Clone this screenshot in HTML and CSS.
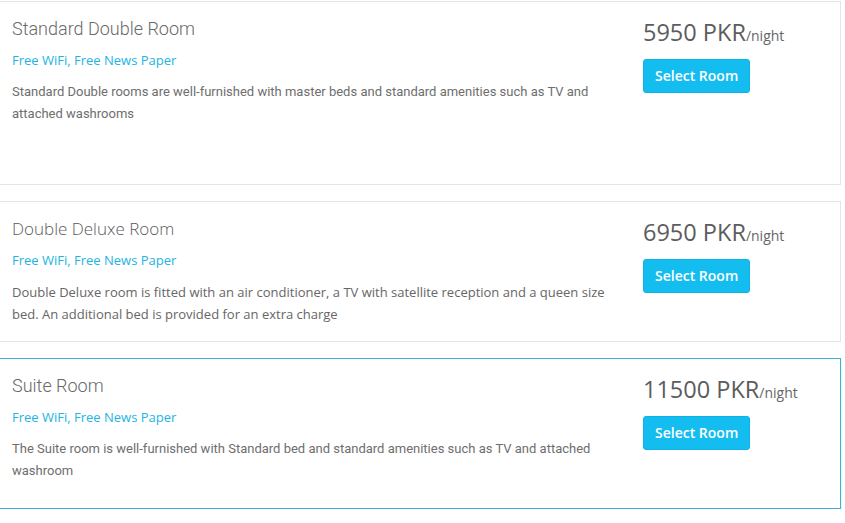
FILE: index.html
```html
<!DOCTYPE html>
<html lang="en">
<head>
<meta charset="utf-8">
<title>Rooms</title>
<link rel="stylesheet" href="styles.css">
</head>
<body>
<div class="list">
  <div class="card card-tall">
    <div class="info">
      <h3 class="title roboto">Standard Double Room</h3>
      <p class="amenities">Free WiFi, Free News Paper</p>
      <p class="desc roboto">Standard Double rooms are well-furnished with master beds and standard amenities such as TV and attached washrooms</p>
    </div>
    <div class="side">
      <div class="price">5950 PKR<span class="per">/night</span></div>
      <button class="btn">Select Room</button>
    </div>
  </div>
  <div class="card">
    <div class="info">
      <h3 class="title">Double Deluxe Room</h3>
      <p class="amenities">Free WiFi, Free News Paper</p>
      <p class="desc">Double Deluxe room is fitted with an air conditioner, a TV with satellite reception and a queen size bed. An additional bed is provided for an extra charge</p>
    </div>
    <div class="side">
      <div class="price">6950 PKR<span class="per">/night</span></div>
      <button class="btn">Select Room</button>
    </div>
  </div>
  <div class="card card-active">
    <div class="info">
      <h3 class="title roboto">Suite Room</h3>
      <p class="amenities">Free WiFi, Free News Paper</p>
      <p class="desc roboto">The Suite room is well-furnished with Standard bed and standard amenities such as TV and attached washroom</p>
    </div>
    <div class="side">
      <div class="price">11500 PKR<span class="per">/night</span></div>
      <button class="btn">Select Room</button>
    </div>
  </div>
</div>
</body>
</html>
```

FILE: styles.css
```css
* { box-sizing: border-box; }
html, body { margin: 0; padding: 0; background: #fff; }
body { font-family: "Open Sans", "Liberation Sans", sans-serif; color: #555; }

.list {
  width: 842px;
  margin-left: -1px;
  padding-top: 1px;
  display: flex;
  flex-direction: column;
  gap: 16px;
}

.card {
  display: flex;
  gap: 16px;
  border: 1px solid #e5e5e5;
  background: #fff;
  padding: 15px 0 16px 12px;
}
.card-tall { min-height: 184px; }
.card-active {
  border-color: #3db3d1;
  padding-bottom: 26px;
  box-shadow: 0 2px 2px rgba(40, 180, 230, 0.35);
}

.info { width: 615px; flex: none; }

.title {
  margin: 0 0 9px;
  font-family: "Open Sans", sans-serif;
  font-weight: 300;
  font-size: 17px;
  line-height: 24px;
  color: #5a5a5a;
}
.title.roboto {
  font-family: "Roboto Light", Roboto, sans-serif;
  font-size: 18px;
  color: #6a6a6a;
}

.amenities {
  margin: 0 0 11px;
  font-size: 13px;
  line-height: 20px;
  color: #22b4e2;
}

.desc {
  margin: 0;
  font-size: 13px;
  line-height: 22px;
  color: #666;
}
.desc.roboto { font-family: Roboto, sans-serif; color: #6e6e6e; }

.side { padding-top: 0; }

.price {
  font-size: 23.5px;
  line-height: 30px;
  color: #5c5c5c;
  white-space: nowrap;
}
.per { font-size: 14px; color: #666; }

.btn {
  margin-top: 8px;
  display: block;
  font-family: "Open Sans", sans-serif;
  font-weight: 600;
  font-size: 14px;
  line-height: 20px;
  padding: 6px 11px;
  color: #fff;
  background: #14bdf0;
  border: 1px solid #10b1e4;
  border-radius: 3px;
}
```
